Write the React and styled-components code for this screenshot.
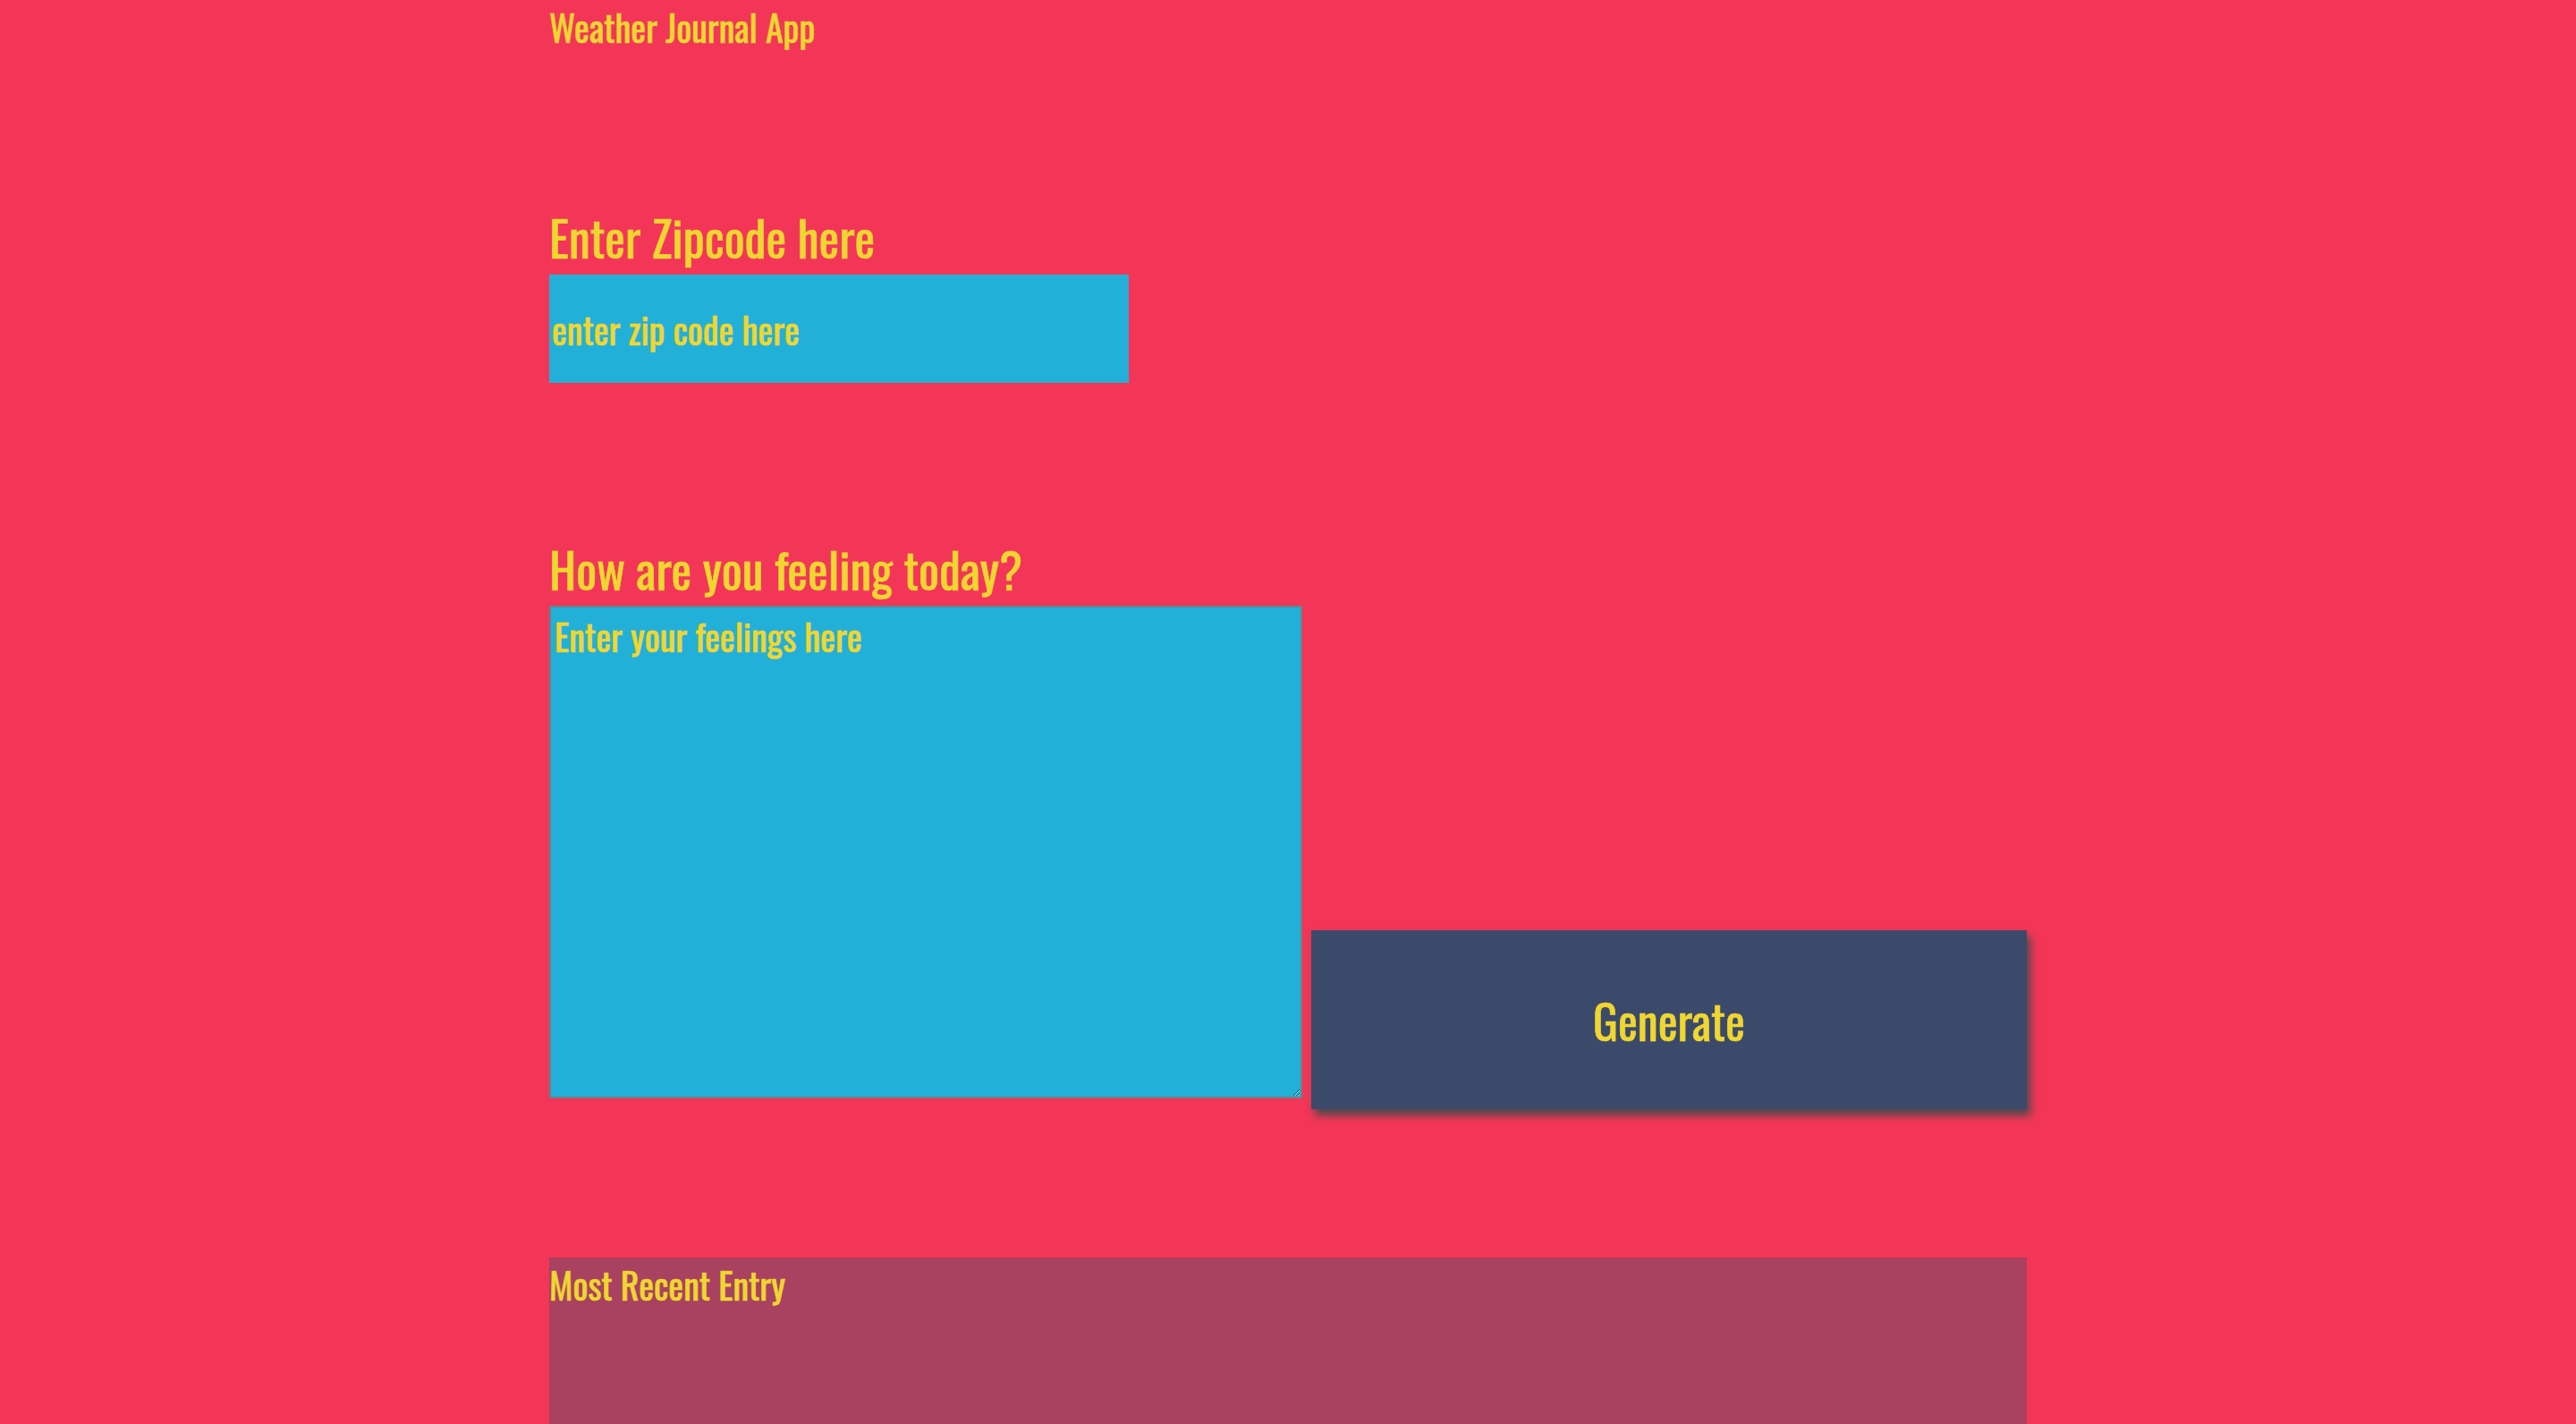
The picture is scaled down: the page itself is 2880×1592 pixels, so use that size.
import React from 'react';
import styled, { createGlobalStyle } from 'styled-components';

const FONT = `"Oswald", "Roboto Condensed", "Open Sans", sans-serif`;

const Global = createGlobalStyle`
  html, body { margin: 0; padding: 0; background: #f33658; }
  body { color: #efd631; font-family: ${FONT}; -webkit-text-stroke: 0.6px #efd631; }
`;

const Page = styled.div`
  width: 1652px;
  margin: 0 auto;
  display: flex;
  flex-direction: column;
`;

const Title = styled.h1`
  margin: 0;
  padding-top: 10px;
  font-family: ${FONT};
  font-weight: 400;
  font-size: 40px;
  line-height: 40px;
`;

const Label = styled.label`
  display: block;
  font-family: ${FONT};
  font-size: 54px;
  line-height: 54px;
  margin-top: ${p => p.$mt}px;
`;

const ZipInput = styled.input`
  box-sizing: border-box;
  width: 648px;
  height: 121px;
  margin-top: 15px;
  border: none;
  outline: none;
  padding: 0 3px;
  background: #23b0d8;
  color: #efd631;
  font-family: ${FONT};
  font-size: 40px;
  -webkit-text-stroke: 0.6px #efd631;
  &::placeholder { color: #efd631; opacity: 1; }
`;

const Row = styled.div`
  display: flex;
  align-items: flex-end;
  gap: 10px;
  margin-top: 14px;
`;

const Feelings = styled.textarea`
  box-sizing: border-box;
  width: 842px;
  height: 551px;
  margin-bottom: 12px;
  border: 2px solid #6e7f87;
  padding: 2px 4px;
  background: #23b0d8;
  color: #efd631;
  font-family: ${FONT};
  font-size: 40px;
  -webkit-text-stroke: 0.6px #efd631;
  outline: none;
  &::placeholder { color: #efd631; opacity: 1; }
`;

const Button = styled.button`
  width: 800px;
  height: 200px;
  padding: 0;
  border: none;
  background: #3b4a6b;
  color: #efd631;
  font-family: ${FONT};
  font-size: 52px;
  -webkit-text-stroke: 0.6px #efd631;
  box-shadow: 4px 7px 9px #4a4a4a;
  cursor: pointer;
`;

const Entry = styled.section`
  margin-top: 166px;
  min-height: 300px;
  background: #a94160;
  padding-top: 10px;
`;

const EntryTitle = styled.div`
  font-family: ${FONT};
  font-size: 40px;
  line-height: 40px;
`;

export default function App() {
  return (
    <>
      <Global />
      <Page>
        <Title>Weather Journal App</Title>
        <Label htmlFor="zip" $mt={188}>Enter Zipcode here</Label>
        <ZipInput id="zip" type="text" placeholder="enter zip code here" />
        <Label htmlFor="feelings" $mt={181}>How are you feeling today?</Label>
        <Row>
          <Feelings id="feelings" placeholder="Enter your feelings here" />
          <Button>Generate</Button>
        </Row>
        <Entry>
          <EntryTitle>Most Recent Entry</EntryTitle>
        </Entry>
      </Page>
    </>
  );
}
